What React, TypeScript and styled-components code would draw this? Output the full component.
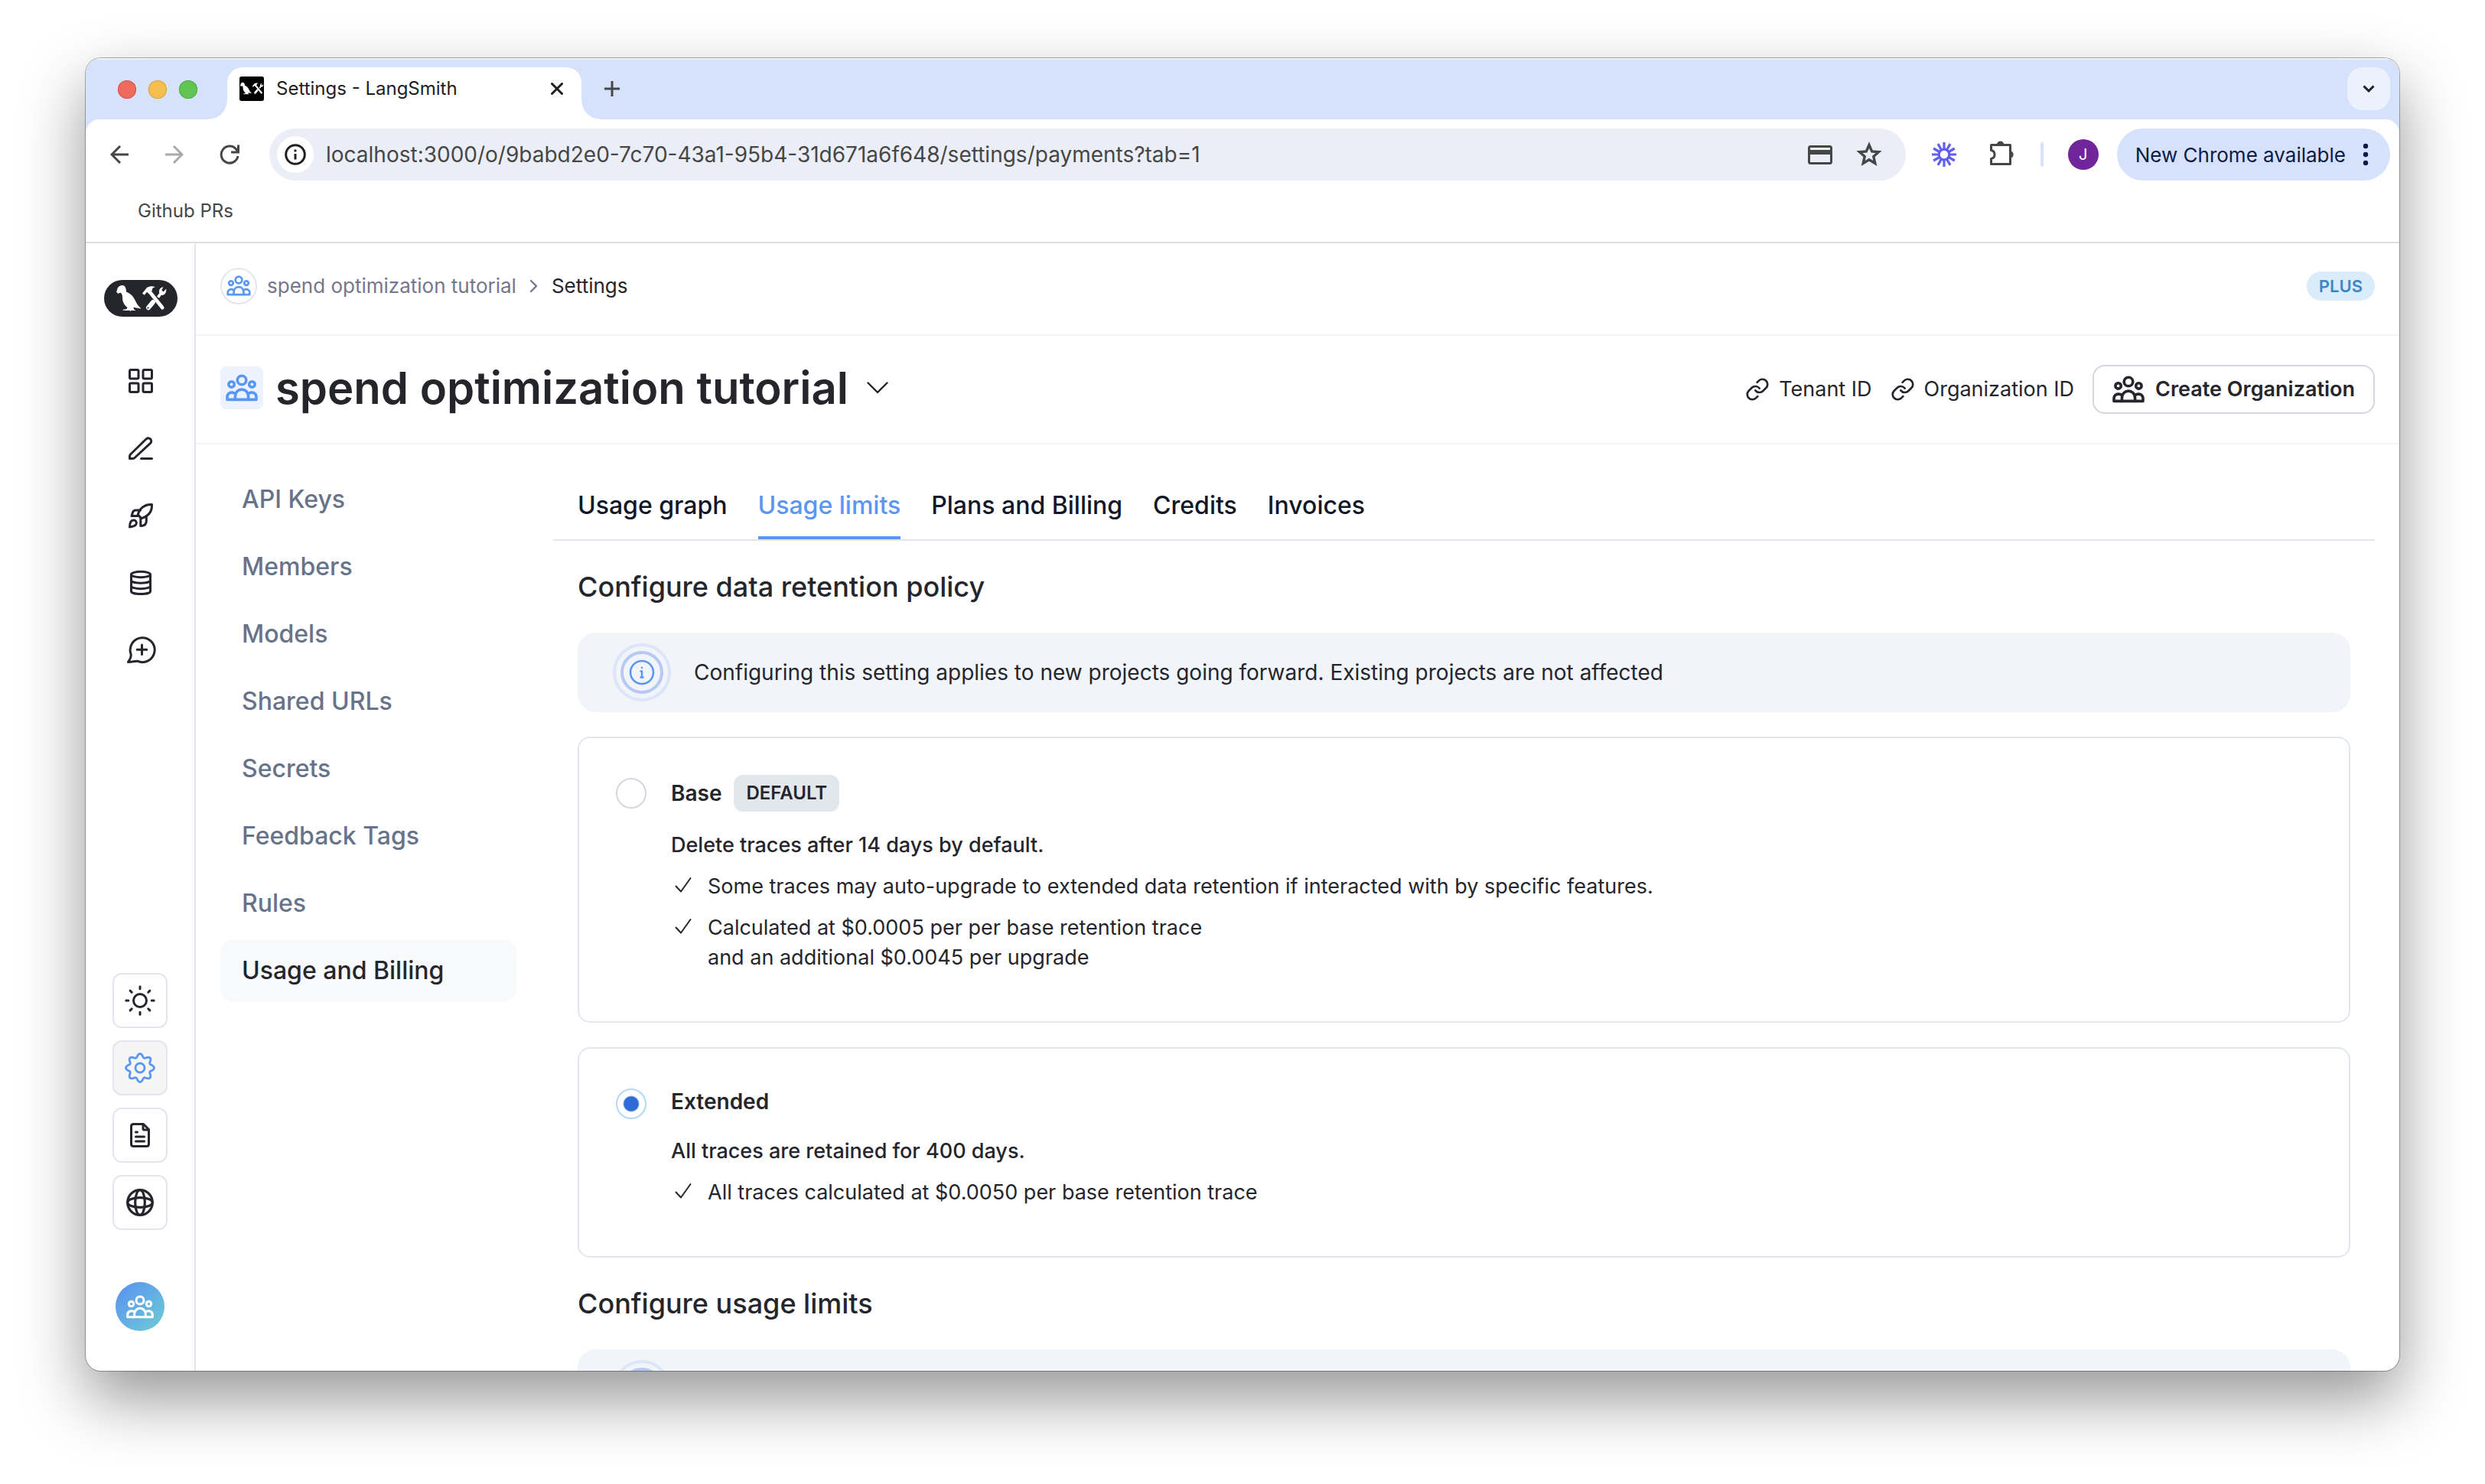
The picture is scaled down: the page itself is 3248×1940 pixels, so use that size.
import React, { useState } from "react";
import styled, { createGlobalStyle } from "styled-components";

const ink = "#25252c";
const line = "#e2e7ee";
const blue = "#5a96f3";
const strip = "#d6e1fb";
const navy = "#0b1b46";

const GlobalStyle = createGlobalStyle`
  *, *::before, *::after { box-sizing: border-box; }
  html, body { margin: 0; padding: 0; background: #fff; }
  body { font-family: Inter, "Liberation Sans", sans-serif; color: ${ink}; }
  button { font: inherit; color: inherit; background: none; border: 0; padding: 0; cursor: pointer; }
  a { color: inherit; text-decoration: none; }
  h1, h2, p, ul { margin: 0; padding: 0; }
  svg { display: block; flex: none; }
`;

/* ---------- Desktop and browser chrome ---------- */

const Desktop = styled.div`
  height: 100vh;
  padding: 76px 112px 148px;
  display: flex;
  overflow: hidden;
`;

const BrowserWindow = styled.div`
  flex: 1;
  min-width: 0;
  display: flex;
  flex-direction: column;
  overflow: hidden;
  border-radius: 20px;
  background: #fff;
  box-shadow: 0 0 0 1px rgba(0, 0, 0, 0.3), 0 36px 84px rgba(0, 0, 0, 0.42);
`;

const TabStrip = styled.div`
  display: flex;
  align-items: flex-end;
  height: 80px;
  padding: 0 12px 0 42px;
  background: ${strip};
  box-shadow: inset 0 2px 0 #edf2fd;
`;

const Lights = styled.div`
  display: flex;
  align-items: center;
  gap: 16px;
  height: 78px;
  margin-right: 39px;
`;

const Light = styled.button<{ $fill: string; $edge: string }>`
  width: 24px;
  height: 24px;
  border-radius: 50%;
  background: ${(p) => p.$fill};
  box-shadow: inset 0 0 0 1px ${(p) => p.$edge};
`;

const BrowserTab = styled.div`
  position: relative;
  display: flex;
  align-items: center;
  gap: 16px;
  width: 463px;
  height: 68px;
  padding: 0 16px 12px;
  border-radius: 20px 20px 0 0;
  background: #fff;
  font-size: 24px;
  line-height: 32px;
  color: #1f2023;

  &::before,
  &::after {
    content: "";
    position: absolute;
    bottom: 0;
    width: 24px;
    height: 24px;
  }
  &::before {
    right: 100%;
    background: radial-gradient(circle at 0 0, transparent 23px, #fff 24px);
  }
  &::after {
    left: 100%;
    background: radial-gradient(circle at 100% 0, transparent 23px, #fff 24px);
  }
`;

const TabTitle = styled.span`
  flex: 1;
  white-space: nowrap;
`;

const StripButton = styled.button`
  display: grid;
  place-items: center;
  width: 32px;
  height: 32px;
`;

const NewTab = styled(StripButton)`
  width: 56px;
  height: 56px;
  margin: 0 auto 12px 12px;
`;

const TabSearch = styled(StripButton)`
  width: 56px;
  height: 56px;
  margin-bottom: 12px;
  border-radius: 20px;
  background: #ebf2fc;
`;

const ToolbarBack = styled.div`
  background: ${strip};
`;

const Toolbar = styled.div`
  display: flex;
  align-items: center;
  gap: 24px;
  height: 92px;
  padding: 0 12px 0 16px;
  border-radius: 18px 18px 0 0;
  background: #fff;
`;

const NavButtons = styled.div`
  display: flex;
  gap: 16px;
`;

const ToolButton = styled.button<{ $w?: number }>`
  display: grid;
  place-items: center;
  width: ${(p) => p.$w ?? 56}px;
  height: 48px;
`;

const AddressBar = styled.label`
  flex: 1;
  display: flex;
  align-items: center;
  height: 68px;
  padding: 0 24px 0 10px;
  border-radius: 34px;
  background: #ebeef7;
`;

const SiteInfo = styled.span`
  display: grid;
  place-items: center;
  width: 48px;
  height: 48px;
  margin-right: 16px;
  border-radius: 50%;
  background: #fff;
`;

const AddressInput = styled.input`
  flex: 1;
  min-width: 0;
  padding: 0;
  border: 0;
  outline: 0;
  background: none;
  font: inherit;
  font-size: 28px;
  line-height: 40px;
  color: #454746;
`;

const BarIcons = styled.span`
  display: flex;
  gap: 16px;
`;

const Divider = styled.span`
  width: 4px;
  height: 32px;
  margin-right: 8px;
  border-radius: 2px;
  background: ${strip};
`;

const Profile = styled.button`
  width: 40px;
  height: 40px;
  border-radius: 50%;
  background: #70259a;
  color: #fff;
  font-size: 20px;
`;

const UpdateButton = styled.button`
  display: flex;
  align-items: center;
  gap: 20px;
  height: 68px;
  padding: 0 26px 0 24px;
  border-radius: 34px;
  background: ${strip};
  color: ${navy};
  font-size: 26px;
  white-space: nowrap;
`;

const Bookmarks = styled.div`
  height: 70px;
  padding: 12px 68px 0;
  border-bottom: 2px solid #e0e0e2;
  font-size: 24px;
  line-height: 32px;
  color: #454746;
`;

/* ---------- Application shell ---------- */

const Shell = styled.div`
  flex: 1;
  min-height: 0;
  display: flex;
`;

const Rail = styled.aside`
  display: flex;
  flex-direction: column;
  align-items: center;
  justify-content: space-between;
  width: 144px;
  padding: 48px 0 52px;
  border-right: 2px solid ${line};
`;

const RailTop = styled.nav`
  display: flex;
  flex-direction: column;
  align-items: center;
  gap: 48px;
  padding-left: 2px;
`;

const RailLinks = styled.div`
  display: flex;
  flex-direction: column;
  gap: 16px;
`;

const RailLink = styled.a`
  display: grid;
  place-items: center;
  width: 72px;
  height: 72px;
`;

const RailBottom = styled.div`
  display: flex;
  flex-direction: column;
  align-items: center;
  gap: 16px;
`;

const RailButton = styled.button<{ $active?: boolean }>`
  display: grid;
  place-items: center;
  width: 72px;
  height: 72px;
  border: 2px solid ${line};
  border-radius: 12px;
  background: ${(p) => (p.$active ? "#f5f5f5" : "#fff")};
  color: ${(p) => (p.$active ? blue : ink)};
`;

const OrgAvatar = styled.button`
  display: grid;
  place-items: center;
  width: 64px;
  height: 64px;
  margin-top: 52px;
  border-radius: 50%;
  color: #fff;
  background: linear-gradient(135deg, #5a96f0 10%, #6cc7d6 90%);
`;

const Page = styled.div`
  flex: 1;
  min-width: 0;
  display: flex;
  flex-direction: column;
  overflow: hidden;
`;

const Crumbs = styled.div`
  display: flex;
  align-items: center;
  gap: 13px;
  height: 121px;
  padding: 0 32px 8px;
  border-bottom: 2px solid #f4f5f8;
  font-size: 26px;
  line-height: 36px;
`;

const CrumbIcon = styled.span`
  display: grid;
  place-items: center;
  width: 48px;
  height: 48px;
  border: 2px solid ${line};
  border-radius: 50%;
  color: ${blue};
`;

const CrumbLink = styled.a`
  color: #77758c;
`;

const PlanPill = styled.span`
  margin-left: auto;
  padding: 0 16px;
  border-radius: 19px;
  background: #daecf9;
  color: #3a86c8;
  font-size: 22px;
  line-height: 38px;
  font-weight: 600;
`;

const TitleBar = styled.header`
  display: flex;
  align-items: center;
  justify-content: space-between;
  height: 142px;
  padding: 0 32px;
  border-bottom: 2px solid #f4f5f8;
`;

const OrgButton = styled.button`
  display: flex;
  align-items: center;
  gap: 16px;
  padding-bottom: 4px;
`;

const OrgIcon = styled.span`
  display: grid;
  place-items: center;
  width: 56px;
  height: 56px;
  border-radius: 8px;
  background: #ecf3fe;
  color: ${blue};
`;

const OrgName = styled.h1`
  margin-right: 8px;
  font-size: 58px;
  line-height: 72px;
  font-weight: 600;
  white-space: nowrap;
`;

const TitleActions = styled.div`
  display: flex;
  align-items: center;
  gap: 24px;
  font-size: 27px;
  line-height: 36px;
`;

const CopyButton = styled.button`
  display: flex;
  align-items: center;
  gap: 12px;
`;

const CreateButton = styled.button`
  display: flex;
  align-items: center;
  gap: 14px;
  height: 64px;
  padding: 0 24px;
  border: 2px solid #d6d6de;
  border-radius: 16px;
  font-weight: 600;
`;

const Body = styled.div`
  flex: 1;
  min-height: 0;
  display: flex;
  align-items: flex-start;
  gap: 48px;
  padding: 32px 32px 0;
`;

const SettingsNav = styled.nav`
  flex: none;
  display: flex;
  flex-direction: column;
  gap: 8px;
  width: 387px;
`;

const SettingsLink = styled.a<{ $active?: boolean }>`
  padding: 20px 28px;
  border-radius: 16px;
  font-size: 32px;
  line-height: 40px;
  font-weight: 500;
  color: ${(p) => (p.$active ? ink : "#667389")};
  background: ${(p) => (p.$active ? "#f8f9fb" : "transparent")};
`;

const Main = styled.main`
  flex: 1;
  min-width: 0;
`;

const Tabs = styled.div`
  display: flex;
  gap: 40px;
  padding: 28px 32px 0;
  border-bottom: 2px solid ${line};
`;

const Tab = styled.button<{ $active?: boolean }>`
  padding-bottom: 20px;
  border-bottom: 4px solid ${(p) => (p.$active ? blue : "transparent")};
  font-size: 32px;
  line-height: 40px;
  font-weight: 500;
  color: ${(p) => (p.$active ? blue : "#101729")};
`;

const Panel = styled.div`
  padding: 0 32px;
`;

const SectionTitle = styled.h2`
  margin: 40px 0;
  font-size: 36px;
  line-height: 40px;
  font-weight: 500;
`;

const Notice = styled.div`
  display: flex;
  align-items: center;
  gap: 28px;
  min-height: 104px;
  padding: 12px 44px;
  border-radius: 24px;
  background: #f1f5fa;
  font-size: 28px;
  line-height: 39px;
`;

const Option = styled.label`
  display: flex;
  align-items: flex-start;
  gap: 32px;
  margin-top: 32px;
  padding: 48px 48px 64px;
  border: 2px solid ${line};
  border-radius: 16px;
  font-size: 27px;
  line-height: 39px;
  cursor: pointer;
`;

const Radio = styled.input`
  appearance: none;
  flex: none;
  width: 40px;
  height: 40px;
  margin: 4px 0 0;
  border: 2px solid #d6d6de;
  border-radius: 50%;
  background: #fff;

  &:checked {
    border-color: #b3d8fb;
    background: radial-gradient(circle, #2e6bd8 9px, #fff 11px);
  }
`;

const OptionHead = styled.div`
  display: flex;
  align-items: center;
  gap: 16px;
  margin-bottom: 24px;
  font-size: 28px;
  line-height: 42px;
  font-weight: 600;
`;

const Badge = styled.span`
  padding: 0 16px;
  border-radius: 12px;
  background: #e2e7ee;
  font-size: 24px;
  line-height: 48px;
`;

const Lead = styled.p`
  font-weight: 500;
`;

const Features = styled.ul`
  list-style: none;
`;

const Feature = styled.li`
  display: flex;
  gap: 16px;
  margin-top: 15px;
  white-space: pre-line;
`;

const CheckBox = styled.span`
  display: grid;
  place-items: center;
  width: 32px;
  height: 36px;
`;

/* ---------- Icons ---------- */

type IconProps = { size?: number; stroke?: number; color?: string };

const Icon = ({
  size = 40,
  stroke = 3,
  color = "currentColor",
  box = "0 0 40 40",
  height,
  children,
}: IconProps & { box?: string; height?: number; children: React.ReactNode }) => (
  <svg
    width={size}
    height={height ?? size}
    viewBox={box}
    fill="none"
    stroke={color}
    strokeWidth={stroke}
    strokeLinecap="round"
    strokeLinejoin="round"
    aria-hidden="true"
  >
    {children}
  </svg>
);

const People = ({ size = 42 }: { size?: number }) => (
  <Icon size={size} height={Math.round((size * 36) / 42)} box="0 0 42 36" stroke={3.6}>
    <circle cx="21" cy="8" r="5.8" />
    <circle cx="7.6" cy="13.4" r="3.7" />
    <circle cx="34.4" cy="13.4" r="3.7" />
    <path d="M12.4 33.4V29.5C12.4 17 29.6 17 29.6 29.5V33.4" />
    <path d="M11.6 25C5.5 22.6 2 26 2 30V33.4H40V30C40 26 36.5 22.6 30.4 25" />
  </Icon>
);

const LogoArt = () => (
  <g>
    <path
      d="M16 15.5C17 14 17 13 17.5 11C19 8 22 6.6 24.5 7C27 7.5 27.8 9 28.5 11.5L29.2 15.5C34 17.5 37.5 20.5 39.5 24.5L43.5 32L48.5 37.8L42.5 36.5L38.5 35.8L39 38.6L41.5 39.4L39.5 40L35.5 39.8L34.5 41L33.5 39.8L29 40L24.5 39.6V38.7L29.5 38L30.5 36C26.5 33 24 28.5 24 23C24 20 23.5 17.5 21 16.6L18.5 18Z"
      fill="#fff"
    />
    <path d="M58 36.2L64 29" stroke="#fff" strokeWidth="6" strokeLinecap="round" />
    <path
      d="M69 21.5L72.3 17.2C71 13 73.5 9.5 77.5 9.2L75.3 13.3L77.5 15.6L81.2 11.5C81.8 16.5 79 20.5 74.8 19.8L72 23.8Z"
      fill="#fff"
    />
    <circle cx="57.5" cy="36.6" r="1.1" fill="#25252c" />
    <path d="M60 16L76.3 36.3" stroke="#fff" strokeWidth="4.6" strokeLinecap="round" />
    <path d="M50 17.5L56.2 9.8C59.5 7.8 64 7.7 67 9.2C64 9.8 62.4 11 63 13.6L58.4 17.8L56 15.7L52.6 19.8Z" fill="#fff" />
  </g>
);

const Logo = () => (
  <svg width="96" height="48" viewBox="0 0 96 48" fill="none" role="img" aria-label="LangSmith">
    <rect width="96" height="48" rx="24" fill={ink} />
    <LogoArt />
  </svg>
);

const Favicon = () => (
  <svg width="32" height="32" viewBox="14 -10 69 69" fill="none" aria-hidden="true">
    <rect x="14" y="-10" width="69" height="69" rx="6" fill="#000" />
    <LogoArt />
  </svg>
);

const GridIcon = () => (
  <Icon>
    {[5.5, 23].map((y) =>
      [5.5, 23].map((x) => <rect key={`${x}-${y}`} x={x} y={y} width="11.5" height="11.5" rx="1.5" />)
    )}
  </Icon>
);

const PencilIcon = () => (
  <Icon>
    <path d="M5.5 33.5H9.5Q11 33.5 12 32.5L32.8 13.2A3.9 3.9 0 0 0 27.2 7.8L6.5 28Q5.5 29 5.5 30.5Z" />
    <path d="M20.5 33.5H34.5" />
  </Icon>
);

const RocketIcon = () => (
  <Icon>
    <path d="M34.5 5.5C25.5 5 18.5 10 16.2 18.8L20.8 23.6C30.5 20.5 35 14 34.5 5.5Z" />
    <path d="M19.5 13H13.5Q10.5 13 9.6 15.6L8 20.5H16.5" />
    <path d="M19.8 23.5V33.5H21Q27.3 33 27.3 27V20.8" />
    <path d="M5.5 35C5.5 29 7.5 26 10.5 26C14 26 15.5 29.5 13.5 32C11.5 34.3 8.5 34.5 5.5 35Z" />
  </Icon>
);

const DatabaseIcon = () => (
  <Icon>
    <ellipse cx="20" cy="9" rx="12.5" ry="3.7" />
    <path d="M7.5 9V31C7.5 33 13 34.6 20 34.6S32.5 33 32.5 31V9" />
    <path d="M7.5 16.5C7.5 18.6 13 20.2 20 20.2S32.5 18.6 32.5 16.5" />
    <path d="M7.5 24C7.5 26 13 27.7 20 27.7S32.5 26 32.5 24" />
  </Icon>
);

const ChatIcon = () => (
  <Icon>
    <path d="M6.9 24.5C8.5 29.5 5.5 32 3.5 35.5C8.5 35.8 12 34 15.5 34.2A16 16 0 1 0 6.9 24.5Z" />
    <path d="M21.5 13V25.5M15.2 19.2H27.8" />
  </Icon>
);

const SunIcon = () => (
  <Icon>
    <circle cx="20" cy="20" r="8.5" />
    {[0, 45, 90, 135, 180, 225, 270, 315].map((a) => (
      <path key={a} d="M20 1.8V4.8" transform={`rotate(${a} 20 20)`} />
    ))}
  </Icon>
);

const gearPath =
  Array.from({ length: 145 }, (_, i) => {
    const t = (i / 144) * Math.PI * 2;
    const r = 16.2 + 2.3 * Math.cos(8 * t);
    return `${i ? "L" : "M"}${(20 + r * Math.cos(t)).toFixed(2)} ${(20 + r * Math.sin(t)).toFixed(2)}`;
  }).join("") + "Z";

const GearIcon = () => (
  <Icon stroke={2.8}>
    <path d={gearPath} />
    <circle cx="20" cy="20" r="6" />
  </Icon>
);

const DocIcon = () => (
  <Icon>
    <path d="M24.5 5.5H11.5Q8.5 5.5 8.5 8.5V31.5Q8.5 34.5 11.5 34.5H28.5Q31.5 34.5 31.5 31.5V12.5Z" />
    <path d="M24 6V11.5Q24 13 25.5 13H31" />
    <path d="M14.5 16H16.5M14.5 22H25.5M14.5 28H25.5" />
  </Icon>
);

const GlobeIcon = () => (
  <Icon stroke={3.2}>
    <circle cx="20" cy="20" r="16.3" />
    <ellipse cx="20" cy="20" rx="6.3" ry="16.3" />
    <ellipse cx="20" cy="20" rx="16.3" ry="6.3" />
  </Icon>
);

const LinkIcon = () => (
  <Icon size={32} box="0 0 24 24" stroke={2}>
    <path d="M10 13a5 5 0 0 0 7.54.54l3-3a5 5 0 0 0-7.07-7.07l-1.72 1.71" />
    <path d="M14 11a5 5 0 0 0-7.54-.54l-3 3a5 5 0 0 0 7.07 7.07l1.71-1.71" />
  </Icon>
);

const InfoRings = () => (
  <svg width="80" height="80" viewBox="0 0 80 80" fill="none" aria-hidden="true">
    <circle cx="40" cy="40" r="36" stroke="#dde5f8" strokeWidth="4" />
    <circle cx="40" cy="40" r="26" stroke="#b7c8f2" strokeWidth="4" />
    <circle cx="40" cy="40" r="15" stroke={blue} strokeWidth="2.6" />
    <path
      d="M40 33.6V34M38.5 38.5H40V46.5M38.5 46.5H41.5"
      stroke={blue}
      strokeWidth="2.4"
      strokeLinecap="round"
      strokeLinejoin="round"
    />
  </svg>
);

const Check = () => (
  <Icon size={22} stroke={2} box="0 0 22 22">
    <path d="M1.5 12.5L8 19.5L20.5 2" />
  </Icon>
);

const Burst = () => (
  <svg width="32" height="32" viewBox="0 0 32 32" fill="none" stroke="#615ef0" strokeWidth="3.2" aria-hidden="true">
    {Array.from({ length: 12 }, (_, i) => (
      <path key={i} d="M16 0V9" transform={`rotate(${i * 30} 16 16)`} />
    ))}
    <circle cx="16" cy="16" r="6.8" strokeWidth="3.2" />
  </svg>
);

/* ---------- Content ---------- */

const railLinks = [
  { label: "Projects", icon: <GridIcon /> },
  { label: "Annotation queues", icon: <PencilIcon /> },
  { label: "Deployments", icon: <RocketIcon /> },
  { label: "Datasets", icon: <DatabaseIcon /> },
  { label: "Prompts", icon: <ChatIcon /> },
];

const railButtons = [
  { label: "Theme", icon: <SunIcon /> },
  { label: "Settings", icon: <GearIcon />, active: true },
  { label: "Documentation", icon: <DocIcon /> },
  { label: "Language", icon: <GlobeIcon /> },
];

const settings = [
  "API Keys",
  "Members",
  "Models",
  "Shared URLs",
  "Secrets",
  "Feedback Tags",
  "Rules",
  "Usage and Billing",
];

const tabs = ["Usage graph", "Usage limits", "Plans and Billing", "Credits", "Invoices"];

const policies = [
  {
    id: "base",
    name: "Base",
    badge: "DEFAULT",
    lead: "Delete traces after 14 days by default.",
    features: [
      "Some traces may auto-upgrade to extended data retention if interacted with by specific features.",
      "Calculated at $0.0005 per per base retention trace\nand an additional $0.0045 per upgrade",
    ],
  },
  {
    id: "extended",
    name: "Extended",
    lead: "All traces are retained for 400 days.",
    features: ["All traces calculated at $0.0050 per base retention trace"],
  },
];

const Chrome = () => (
  <>
    <TabStrip>
      <Lights>
        <Light $fill="#ed6a5e" $edge="#d5564b" aria-label="Close window" />
        <Light $fill="#f5bf4f" $edge="#d9a33c" aria-label="Minimize window" />
        <Light $fill="#61c554" $edge="#4dab40" aria-label="Zoom window" />
      </Lights>
      <BrowserTab>
        <Favicon />
        <TabTitle>Settings - LangSmith</TabTitle>
        <StripButton aria-label="Close tab">
          <Icon size={16} box="0 0 16 16" color="#1f2023">
            <path d="M1.5 1.5L14.5 14.5M14.5 1.5L1.5 14.5" />
          </Icon>
        </StripButton>
      </BrowserTab>
      <NewTab aria-label="New tab">
        <Icon size={20} box="0 0 20 20" color="#454746">
          <path d="M10 0V20M0 10H20" strokeLinecap="butt" />
        </Icon>
      </NewTab>
      <TabSearch aria-label="Search tabs">
        <Icon size={16} box="0 0 16 16" color="#1f2023">
          <path d="M1.5 4.5L8 11L14.5 4.5" strokeLinecap="butt" strokeLinejoin="miter" />
        </Icon>
      </TabSearch>
    </TabStrip>
    <ToolbarBack>
      <Toolbar>
        <NavButtons>
          <ToolButton aria-label="Back">
            <svg width="24" height="24" viewBox="0 0 24 24" fill="none" stroke="#454746" strokeWidth="3">
              <path d="M13 1L2 12L13 23M2 12H24" />
            </svg>
          </ToolButton>
          <ToolButton aria-label="Forward">
            <svg width="24" height="24" viewBox="0 0 24 24" fill="none" stroke="#a9aaab" strokeWidth="3">
              <path d="M11 1L22 12L11 23M22 12H0" />
            </svg>
          </ToolButton>
          <ToolButton aria-label="Reload">
            <svg width="26" height="26" viewBox="0 0 26 26" fill="none" stroke="#454746" strokeWidth="3">
              <path d="M24 15A11 11 0 1 1 22 6.5L24 9.5M15 10H24.5V0.5" />
            </svg>
          </ToolButton>
        </NavButtons>
        <AddressBar>
          <SiteInfo>
            <Icon size={28} box="0 0 28 28" color="#1f2023">
              <circle cx="14" cy="14" r="12.3" />
              <path d="M14 13V20.5M14 7.5V10.5" strokeLinecap="butt" />
            </Icon>
          </SiteInfo>
          <AddressInput
            aria-label="Address"
            defaultValue="localhost:3000/o/9babd2e0-7c70-43a1-95b4-31d671a6f648/settings/payments?tab=1"
          />
          <BarIcons>
            <ToolButton as="span" $w={48}>
              <Icon size={34} box="0 0 34 34" color="#454746">
                <rect x="2.5" y="6.5" width="29" height="22" rx="2" />
                <path d="M2.500 14H31.500" strokeWidth="6" strokeLinecap="butt" />
              </Icon>
            </ToolButton>
            <ToolButton as="span" $w={48}>
              <Icon size={34} box="0 0 34 34" stroke={3.4} color="#454746">
                <path
                  d="M17 4.500L20.700 12.900L29.500 13.700L22.800 19.500L24.800 28.500L17 23.800L9.200 28.500L11.200 19.500L4.500 13.700L13.300 12.900Z"
                  strokeLinejoin="miter"
                />
              </Icon>
            </ToolButton>
          </BarIcons>
        </AddressBar>
        <ToolButton $w={52} aria-label="Extension">
          <Burst />
        </ToolButton>
        <ToolButton $w={52} aria-label="Extensions">
          <Icon color="#454746">
            <path d="M5.5 7.5H30.500V32.500H5.500V25.500A5.600 5.600 0 0 0 5.500 14.500Z" />
            <path d="M13 7A4.600 4.600 0 0 1 22.200 7ZM31 15.500A4.600 4.600 0 0 1 31 24.500Z" fill="#454746" strokeWidth="0" />
          </Icon>
        </ToolButton>
        <Divider />
        <Profile aria-label="Profile J">J</Profile>
        <UpdateButton>
          New Chrome available
          <svg width="12" height="32" viewBox="0 0 12 32" fill={navy} aria-hidden="true">
            <circle cx="6" cy="5" r="3.2" />
            <circle cx="6" cy="16" r="3.2" />
            <circle cx="6" cy="27" r="3.2" />
          </svg>
        </UpdateButton>
      </Toolbar>
    </ToolbarBack>
    <Bookmarks>
      <a href="#github-prs">Github PRs</a>
    </Bookmarks>
  </>
);

export default function App() {
  const [policy, setPolicy] = useState("extended");

  return (
    <>
      <GlobalStyle />
      <Desktop>
        <BrowserWindow>
          <Chrome />
          <Shell>
            <Rail>
              <RailTop>
                <Logo />
                <RailLinks>
                  {railLinks.map((l) => (
                    <RailLink key={l.label} href="#" aria-label={l.label}>
                      {l.icon}
                    </RailLink>
                  ))}
                </RailLinks>
              </RailTop>
              <RailBottom>
                {railButtons.map((b) => (
                  <RailButton key={b.label} $active={b.active} aria-label={b.label}>
                    {b.icon}
                  </RailButton>
                ))}
                <OrgAvatar aria-label="Organization">
                  <People size={36} />
                </OrgAvatar>
              </RailBottom>
            </Rail>
            <Page>
              <Crumbs>
                <CrumbIcon>
                  <People size={32} />
                </CrumbIcon>
                <CrumbLink href="#">spend optimization tutorial</CrumbLink>
                <Icon size={20} box="0 0 20 20" stroke={2.4} color="#77758c">
                  <path d="M6 3L13 10L6 17" />
                </Icon>
                <span>Settings</span>
                <PlanPill>PLUS</PlanPill>
              </Crumbs>
              <TitleBar>
                <OrgButton>
                  <OrgIcon>
                    <People />
                  </OrgIcon>
                  <OrgName>spend optimization tutorial</OrgName>
                  <Icon size={28} height={16} box="0 0 28 16" stroke={2.4}>
                    <path d="M1.5 1.5L14 14L26.5 1.5" />
                  </Icon>
                </OrgButton>
                <TitleActions>
                  <CopyButton>
                    <LinkIcon />
                    Tenant ID
                  </CopyButton>
                  <CopyButton>
                    <LinkIcon />
                    Organization ID
                  </CopyButton>
                  <CreateButton>
                    <People />
                    Create Organization
                  </CreateButton>
                </TitleActions>
              </TitleBar>
              <Body>
                <SettingsNav>
                  {settings.map((s) => (
                    <SettingsLink key={s} href="#" $active={s === "Usage and Billing"}>
                      {s}
                    </SettingsLink>
                  ))}
                </SettingsNav>
                <Main>
                  <Tabs role="tablist">
                    {tabs.map((t) => (
                      <Tab key={t} role="tab" aria-selected={t === "Usage limits"} $active={t === "Usage limits"}>
                        {t}
                      </Tab>
                    ))}
                  </Tabs>
                  <Panel>
                    <SectionTitle>Configure data retention policy</SectionTitle>
                    <Notice>
                      <InfoRings />
                      <p>
                        Configuring this setting applies to new projects going forward. Existing projects are not
                        affected
                      </p>
                    </Notice>
                    {policies.map((p) => (
                      <Option key={p.id}>
                        <Radio
                          type="radio"
                          name="policy"
                          value={p.id}
                          checked={policy === p.id}
                          onChange={() => setPolicy(p.id)}
                        />
                        <div>
                          <OptionHead>
                            {p.name}
                            {p.badge && <Badge>{p.badge}</Badge>}
                          </OptionHead>
                          <Lead>{p.lead}</Lead>
                          <Features>
                            {p.features.map((f) => (
                              <Feature key={f}>
                                <CheckBox>
                                  <Check />
                                </CheckBox>
                                <span>{f}</span>
                              </Feature>
                            ))}
                          </Features>
                        </div>
                      </Option>
                    ))}
                    <SectionTitle>Configure usage limits</SectionTitle>
                    <Notice>
                      <InfoRings />
                    </Notice>
                  </Panel>
                </Main>
              </Body>
            </Page>
          </Shell>
        </BrowserWindow>
      </Desktop>
    </>
  );
}
